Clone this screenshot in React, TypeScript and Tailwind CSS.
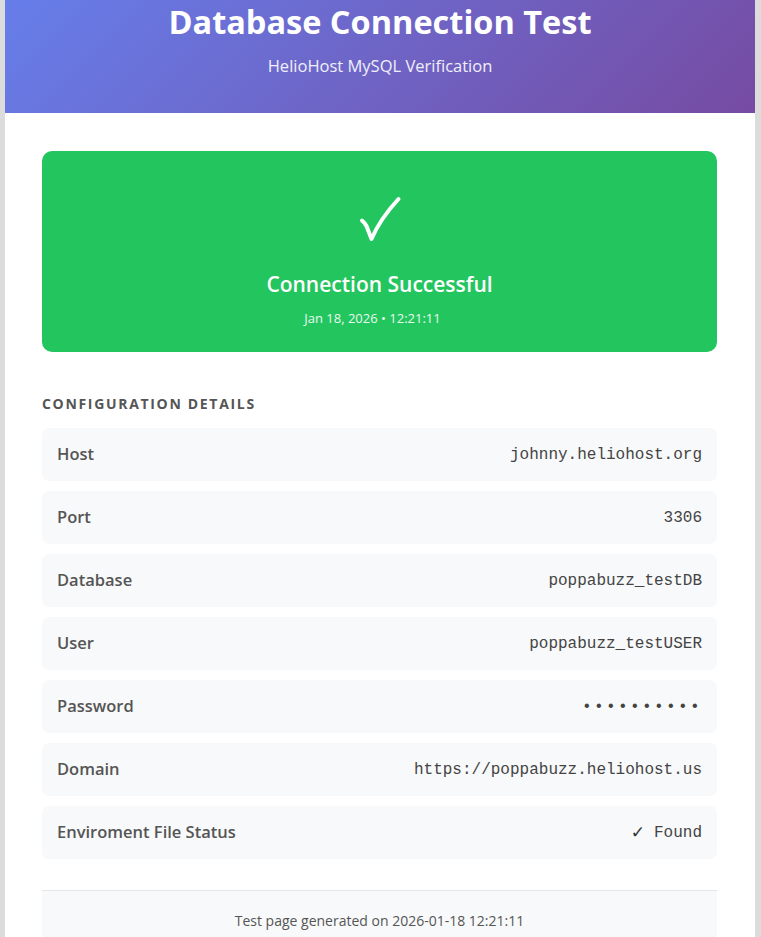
const rows = [
  { label: "Host", value: "johnny.heliohost.org" },
  { label: "Port", value: "3306" },
  { label: "Database", value: "poppabuzz_testDB" },
  { label: "User", value: "poppabuzz_testUSER" },
  { label: "Password", value: "••••••••••", secret: true },
  { label: "Domain", value: "https://poppabuzz.heliohost.us" },
  { label: "Enviroment File Status", value: "Found", check: true },
];

const sans = "font-['Open_Sans','Noto_Sans',sans-serif]";
const mono = "font-['Liberation_Mono','Courier_New',monospace]";

export default function App() {
  return (
    <div className={`min-h-screen bg-[#dcdcdc] pl-[5px] ${sans}`}>
      <div className="w-[750px] bg-white">
        <header className="flex h-[113px] flex-col items-center justify-end bg-[linear-gradient(135deg,#667eea_0%,#764ba2_100%)] pb-[35px] text-white">
          <h1 className="text-[32.5px] font-bold leading-[40px]">Database Connection Test</h1>
          <p className="mt-[12px] text-[16.5px] leading-[24px] text-white/90">HelioHost MySQL Verification</p>
        </header>

        <main className="pl-[37px] pr-[38px] pt-[38px]">
          <section className="flex h-[201px] flex-col items-center rounded-[10px] bg-[#22c55e] pt-[44px] text-white">
            <svg width="44" height="50" viewBox="0 0 44 50" fill="none" aria-label="✓">
              <path
                d="M4 25.5 Q7 28 8.5 31 L13.5 44 Q22 24 40.5 4"
                stroke="white"
                strokeWidth="4"
                strokeLinecap="round"
                strokeLinejoin="round"
              />
            </svg>
            <div className="mt-[24px] text-[21px] font-semibold leading-[30px]">Connection Successful</div>
            <div className="mt-[9px] pr-[14px] text-[13px] leading-[20px] text-white/90">Jan 18, 2026 • 12:21:11</div>
          </section>

          <h2 className="mt-[42px] text-[14px] font-bold uppercase leading-[20px] tracking-[0.12em] text-[#555]">
            Configuration Details
          </h2>

          <div className="mt-[14px] flex flex-col gap-[10px]">
            {rows.map((row) => (
              <div
                key={row.label}
                className="flex h-[53px] items-center justify-between rounded-[7px] bg-[#f8f9fa] px-[15px]"
              >
                <span className="text-[16.5px] font-semibold text-[#555]">{row.label}</span>
                <span
                  className={`${mono} flex items-center text-[16px] text-[#444] ${row.secret ? "tracking-[2.4px]" : ""}`}
                >
                  {row.check && (
                    <span className="mr-[9px] font-['DejaVu_Sans',sans-serif] text-[17px] leading-none text-[#333]">✓</span>
                  )}
                  {row.value}
                </span>
              </div>
            ))}
          </div>

          <footer className="mt-[31px] flex h-[60px] justify-center border-t border-[#e5e7eb] bg-[#f8f9fa] pt-[20px] text-[14px] leading-[20px] text-[#555]">
            Test page generated on 2026-01-18 12:21:11
          </footer>
        </main>
      </div>
    </div>
  );
}
